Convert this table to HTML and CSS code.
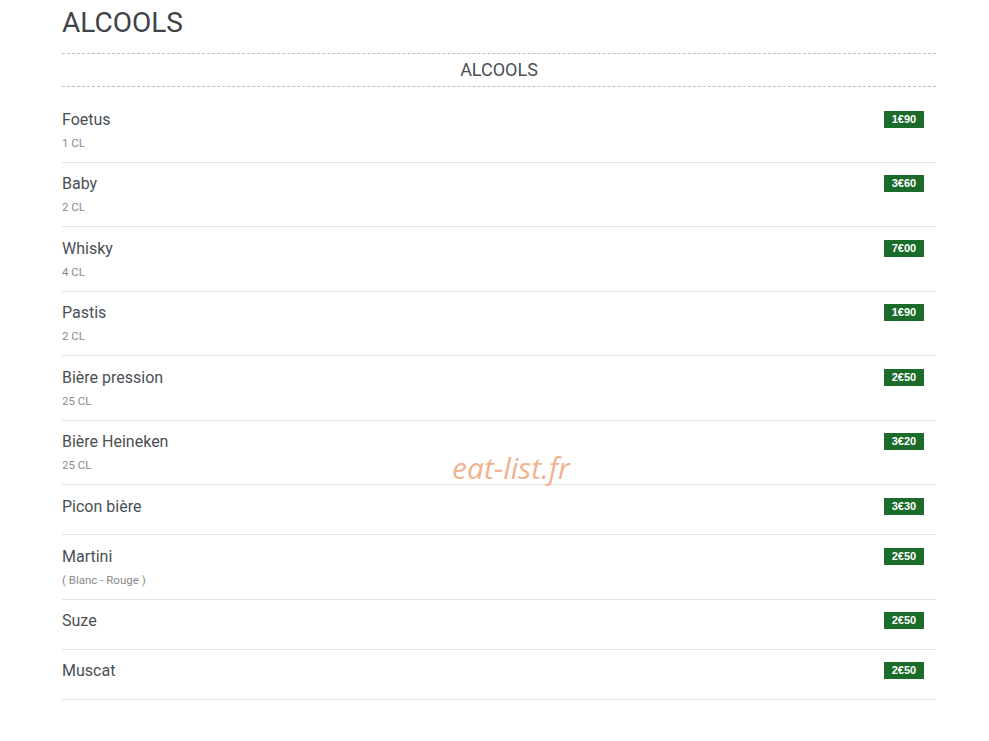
FILE: index.html
```html
<!DOCTYPE html>
<html lang="fr">
<head>
<meta charset="utf-8">
<title>ALCOOLS</title>
<link rel="stylesheet" href="styles.css">
</head>
<body>
<div class="page">
  <h1 class="title">ALCOOLS</h1>
  <h2 class="section">ALCOOLS</h2>
  <ul class="menu">
    <li class="item"><div class="info"><div class="name">Foetus</div><div class="sub">1 CL</div></div><span class="price">1€90</span></li>
    <li class="item"><div class="info"><div class="name">Baby</div><div class="sub">2 CL</div></div><span class="price">3€60</span></li>
    <li class="item"><div class="info"><div class="name">Whisky</div><div class="sub">4 CL</div></div><span class="price">7€00</span></li>
    <li class="item"><div class="info"><div class="name">Pastis</div><div class="sub">2 CL</div></div><span class="price">1€90</span></li>
    <li class="item"><div class="info"><div class="name">Bière pression</div><div class="sub">25 CL</div></div><span class="price">2€50</span></li>
    <li class="item"><div class="info"><div class="name">Bière Heineken</div><div class="sub">25 CL</div></div><span class="price">3€20</span></li>
    <li class="item nosub"><div class="info"><div class="name">Picon bière</div></div><span class="price">3€30</span></li>
    <li class="item"><div class="info"><div class="name">Martini</div><div class="sub">( Blanc - Rouge )</div></div><span class="price">2€50</span></li>
    <li class="item nosub"><div class="info"><div class="name">Suze</div></div><span class="price">2€50</span></li>
    <li class="item nosub"><div class="info"><div class="name">Muscat</div></div><span class="price">2€50</span></li>
  </ul>
  <div class="watermark">eat-list.fr</div>
</div>
</body>
</html>
```
FILE: styles.css
```css
html, body {
  margin: 0;
  padding: 0;
  background: #fff;
}
body {
  font-family: Roboto, "Liberation Sans", sans-serif;
  color: #4a4f56;
}
.page {
  position: relative;
  width: 874px;
  margin-left: 62px;
  padding-bottom: 40px;
}
.title {
  margin: 0;
  padding-top: 6px;
  font-size: 28px;
  font-weight: 400;
  line-height: 34px;
  color: #3e434a;
  height: 47px;
}
.section {
  margin: 0 0 11px;
  border-top: 1px dashed #bdbdbd;
  border-bottom: 1px dashed #bdbdbd;
  font-size: 18px;
  font-weight: 400;
  line-height: 32px;
  text-align: center;
  color: #4a4f56;
}
.menu {
  list-style: none;
  margin: 0;
  padding: 0;
}
.item {
  display: flex;
  justify-content: space-between;
  align-items: flex-start;
  padding: 10.75px 0;
  border-bottom: 1px solid #e4e4e4;
}
.item.nosub {
  padding-bottom: 16.25px;
}
.name {
  font-size: 16px;
  line-height: 22px;
  color: #4a4f56;
}
.sub {
  margin-top: 4px;
  font-size: 11.5px;
  line-height: 16px;
  color: #8a8a8a;
}
.price {
  margin-top: 2px;
  margin-right: 12px;
  background: #1b6b2b;
  color: #fff;
  font-family: "Liberation Sans", Arial, sans-serif;
  font-weight: 700;
  font-size: 11px;
  line-height: 17px;
  width: 40px;
  text-align: center;
}
.watermark {
  position: absolute;
  left: 390px;
  top: 447px;
  font-family: "Open Sans", sans-serif;
  font-style: italic;
  font-size: 30px;
  color: #f0b391;
}
```
